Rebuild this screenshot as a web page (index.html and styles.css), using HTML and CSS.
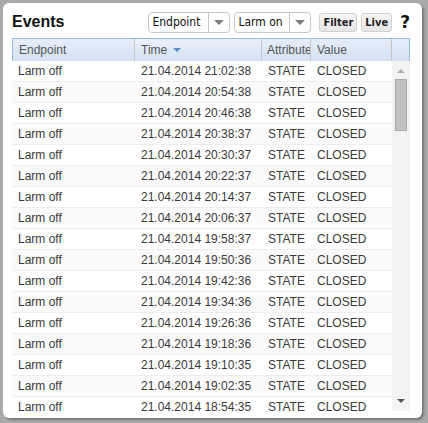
FILE: index.html
```html
<!DOCTYPE html>
<html>
<head>
<meta charset="utf-8">
<link rel="stylesheet" href="styles.css">
</head>
<body>
<div class="panel">
  <div class="toolbar">
    <div class="title">Events</div>
    <div class="tools">
      <div class="combo combo-endpoint"><span class="combo-text">Endpoint</span><span class="combo-btn"><span class="tri"></span></span></div>
      <div class="combo combo-larm"><span class="combo-text">Larm on</span><span class="combo-btn"><span class="tri"></span></span></div>
      <div class="btn">Filter</div>
      <div class="btn">Live</div>
      <div class="help">?</div>
    </div>
  </div>
  <div class="grid">
    <div class="head">
      <div class="hc c1">Endpoint</div>
      <div class="hc c2 sorted">Time <span class="sort"></span></div>
      <div class="hc c3">Attribute</div>
      <div class="hc c4">Value</div>
      <div class="hc c5"></div>
    </div>
    <div class="body">
      <div class="rows" id="rows"></div>
      <div class="scroll">
        <div class="arr up"></div>
        <div class="thumb"></div>
        <div class="track"></div>
        <div class="arr down"></div>
      </div>
    </div>
  </div>
</div>
<script>
var times=["21:02:38","20:54:38","20:46:38","20:38:37","20:30:37","20:22:37","20:14:37","20:06:37","19:58:37","19:50:36","19:42:36","19:34:36","19:26:36","19:18:36","19:10:35","19:02:35","18:54:35"];
var h="";
times.forEach(function(t,i){
  h+='<div class="row'+(i%2?' alt':'')+'"><div class="c c1">Larm off</div><div class="c c2">21.04.2014 '+t+'</div><div class="c c3">STATE</div><div class="c c4">CLOSED</div></div>';
});
document.getElementById("rows").innerHTML=h;
</script>
</body>
</html>
```

FILE: styles.css
```css
html,body{margin:0;padding:0}
body{
  width:428px;height:423px;
  background:#a9a9a9;
  font-family:Arial,"Liberation Sans",sans-serif;
  overflow:hidden;
}
.panel{
  position:relative;
  margin:3px 0 0 3px;
  width:419px;height:415px;
  background:#fff;
  border-radius:6px;
  box-shadow:2px 2px 2px #7a7a7a;
  box-sizing:border-box;
  padding:0 0 0 9px;
  display:flex;flex-direction:column;
}
.toolbar{
  display:flex;align-items:center;justify-content:space-between;
  height:35px;flex:none;
  padding-right:12px;
}
.title{
  font-weight:bold;font-size:16px;color:#111;
  padding-top:2px;
}
.tools{display:flex;align-items:center;padding-top:3px}
.combo{
  display:flex;height:19px;
  border:1px solid #c8c8c8;border-radius:4px;
  background:#fff;box-sizing:content-box;
  margin-right:4px;
}
.combo-text{
  color:#111;
  padding:0 0 0 3px;line-height:19px;
  font-family:"DejaVu Sans Condensed","DejaVu Sans",sans-serif;
  font-size:12px;
}
.combo-endpoint .combo-text{width:56px}
.combo-larm .combo-text{width:51px}
.combo-btn{
  width:20px;border-left:1px solid #c8c8c8;
  display:flex;align-items:center;justify-content:center;
}
.tri{width:0;height:0;border-left:5px solid transparent;border-right:5px solid transparent;border-top:5px solid #7d7d7d}
.btn{
  height:17px;line-height:17px;
  border:1px solid #d0d0d0;border-radius:3px;
  background:linear-gradient(#f6f6f6,#e6e6e6);
  font-size:11px;font-weight:bold;color:#222;
  font-family:"DejaVu Sans Condensed","DejaVu Sans",sans-serif;
  padding:0 3px;margin-left:4px;
}
.help{font-weight:bold;font-size:17px;margin-left:8px;color:#111;font-family:"DejaVu Sans",sans-serif}
.grid{
  width:398px;height:373px;
  border-top:1px solid #99bbe8;
  box-sizing:border-box;
  overflow:hidden;
  display:flex;flex-direction:column;
}
.head{
  display:flex;height:22px;flex:none;
  background:linear-gradient(#e5eefa,#d3e1f1);
  border-left:1px solid #99bbe8;border-right:1px solid #99bbe8;
  box-sizing:border-box;
}
.hc{
  font-size:12px;color:#555;line-height:23px;
  padding-left:6px;box-sizing:border-box;
  border-right:1px solid #c5c5c5;
  white-space:nowrap;overflow:hidden;
}
.head .c1{width:122px}
.head .c2{width:127px;background:linear-gradient(#e9f1fb,#d3e1f3)}
.head .c3{width:49px;padding-left:5px}
.head .c4{width:81px}
.head .c5{flex:1;border-right:none}
.sort{display:inline-block;width:0;height:0;border-left:4px solid transparent;border-right:4px solid transparent;border-top:4px solid #5b8cc6;vertical-align:2px;margin-left:2px}
.body{display:flex;flex:1;min-height:0}
.rows{width:380px;overflow:hidden}
.row{display:flex;height:21px;border-bottom:1px solid #ededed;box-sizing:border-box;background:#fff}
.row.alt{background:#fafafa}
.c{font-size:12px;color:#3a3a3a;line-height:21px;padding-left:6px;box-sizing:border-box;white-space:nowrap;overflow:hidden}
.row .c1{width:123px}
.row .c2{width:127px}
.row .c3{width:49px}
.row .c4{width:81px}
.scroll{
  width:18px;flex:none;background:#f3f3f3;
  display:flex;flex-direction:column;align-items:center;
}
.arr{width:0;height:0;border-left:4px solid transparent;border-right:4px solid transparent;margin:8px 0 6px}
.arr.up{border-bottom:4px solid #b0b0b0}
.arr.down{border-top:4px solid #555;margin:5px 0 8px}
.thumb{width:12px;height:52px;background:#c2c2c2;border:1px solid #a9a9a9;box-sizing:border-box}
.track{flex:1}
```
